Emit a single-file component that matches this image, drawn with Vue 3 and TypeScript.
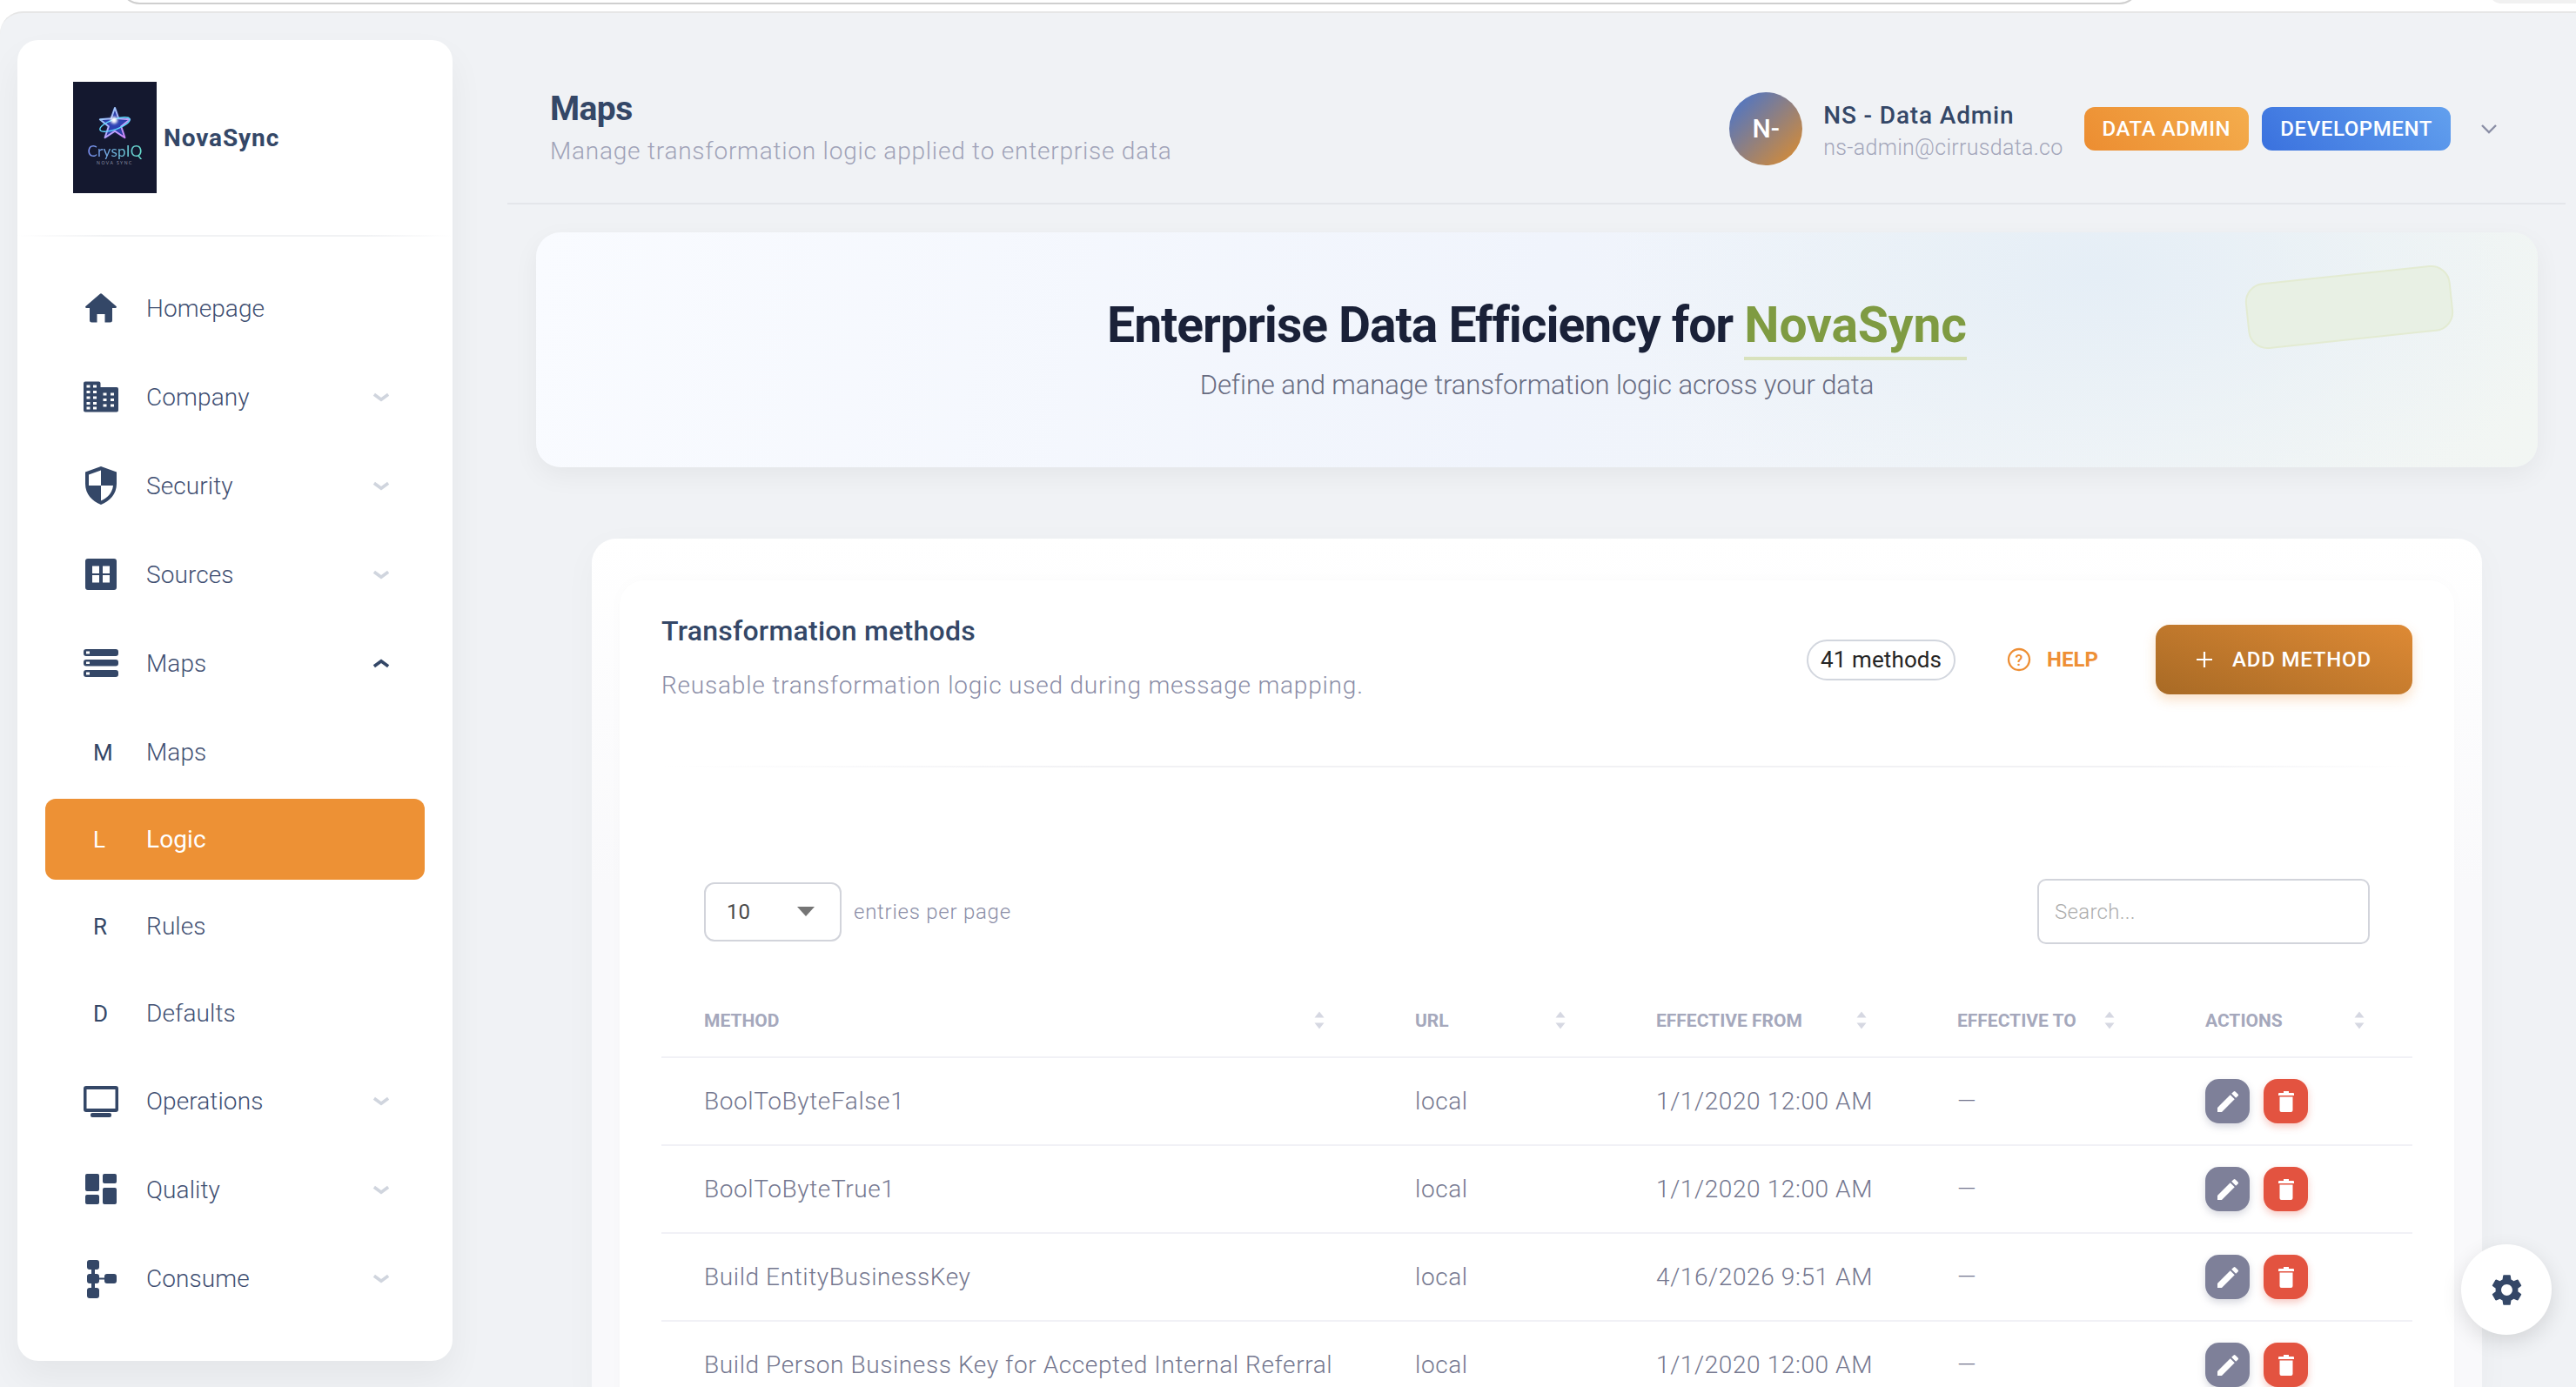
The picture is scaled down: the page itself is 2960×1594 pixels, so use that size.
<script setup lang="ts">
type NavItem = { label: string; icon?: string; letter?: string; arrow?: 'up' | 'down'; active?: boolean };

const box = (x: number, y: number, w: number, h: number, r = 0) =>
  `M${x + r} ${y}h${w - 2 * r}a${r} ${r} 0 0 1 ${r} ${r}v${h - 2 * r}a${r} ${r} 0 0 1 ${-r} ${r}h${2 * r - w}a${r} ${r} 0 0 1 ${-r} ${-r}v${2 * r - h}a${r} ${r} 0 0 1 ${r} ${-r}z`;

// icons sit in a 40x44 box
const icons: Record<string, string> = {
  home: 'M18.6 6a2 2 0 0 1 2.8 0L37.6 20a1.2 1.2 0 0 1-.8 2H33V36a2.5 2.5 0 0 1-2.5 2.5H24.5V29H15.5V38.5H9.5A2.5 2.5 0 0 1 7 36V22H3.2a1.2 1.2 0 0 1-.8-2z',
  company:
    'M2 4.5H17.5a2 2 0 0 1 2 2V11H38a2 2 0 0 1 2 2V37.5a2 2 0 0 1-2 2H2a2 2 0 0 1-2-2V6.5a2 2 0 0 1 2-2z' +
    [8.5, 15, 21.5, 28, 33.5].map((y) => box(3.5, y, 4, 3) + box(11, y, 4, 3)).join('') +
    [17.5, 24, 30.5].map((y) => box(22.5, y, 4, 3) + box(31, y, 4, 3)).join(''),
  security:
    'M20 0L38 6.5V20C38 32 30 40 20 44C10 40 2 32 2 20V6.5z' +
    'M20 4.5L6 9.5V22H20zM20 22V39.5C27 36.5 33 31 34 22z',
  sources: box(2, 4, 36, 36, 3) + box(10, 12.5, 8, 8.5) + box(22, 12.5, 8, 8.5) + box(10, 23, 8, 8.5) + box(22, 23, 8, 8.5),
  maps:
    box(0, 6, 40, 8, 3) + box(3, 8.5, 4, 3) + box(0, 18, 40, 7.5, 3) + box(3, 20.5, 4, 2.5) + box(0, 30, 40, 8, 3) + box(3, 32.5, 4, 3),
  operations: box(0, 5, 40, 30, 3) + box(3.5, 9, 33, 22) + box(8, 36, 24, 5, 2),
  quality: box(2, 4, 16, 20, 2) + box(2, 28, 16, 11, 2) + box(22, 4, 16, 11, 2) + box(22, 20, 16, 19, 2),
  consume:
    box(4, 1, 14, 11, 3) + box(4, 17, 14, 11, 3) + box(4, 33, 14, 12, 3) + box(24, 17, 14, 11, 3) +
    box(9, 12, 4, 5) + box(9, 28, 4, 5) + box(18, 21.5, 6, 2),
};

const nav: NavItem[] = [
  { label: 'Homepage', icon: 'home' },
  { label: 'Company', icon: 'company', arrow: 'down' },
  { label: 'Security', icon: 'security', arrow: 'down' },
  { label: 'Sources', icon: 'sources', arrow: 'down' },
  { label: 'Maps', icon: 'maps', arrow: 'up' },
  { label: 'Maps', letter: 'M' },
  { label: 'Logic', letter: 'L', active: true },
  { label: 'Rules', letter: 'R' },
  { label: 'Defaults', letter: 'D' },
  { label: 'Operations', icon: 'operations', arrow: 'down' },
  { label: 'Quality', icon: 'quality', arrow: 'down' },
  { label: 'Consume', icon: 'consume', arrow: 'down' },
];

const columns = ['Method', 'URL', 'Effective from', 'Effective to', 'Actions'];

const methods = [
  { name: 'BoolToByteFalse1', url: 'local', from: '1/1/2020 12:00 AM', to: '—' },
  { name: 'BoolToByteTrue1', url: 'local', from: '1/1/2020 12:00 AM', to: '—' },
  { name: 'Build EntityBusinessKey', url: 'local', from: '4/16/2026 9:51 AM', to: '—' },
  { name: 'Build Person Business Key for Accepted Internal Referral', url: 'local', from: '1/1/2020 12:00 AM', to: '—' },
];
</script>

<template>
  <div class="page">
    <div class="chrome">
      <span class="url-bar"></span>
      <span class="chrome-btn"></span>
    </div>
    <div class="shell">
      <aside class="sidebar">
        <div class="brand">
          <div class="logo">
            <svg class="logo-star" viewBox="0 0 44 44" width="42" height="42">
              <defs>
                <filter id="glow" x="-50%" y="-50%" width="200%" height="200%"><feGaussianBlur stdDeviation="1.4" /></filter>
                <linearGradient id="ring" x1="0" y1="0" x2="1" y2="1">
                  <stop offset="0" stop-color="#8fe0ff" />
                  <stop offset="1" stop-color="#d77cfa" />
                </linearGradient>
              </defs>
              <path d="M22 3L26.500 16L40 17L29.500 25.500L34 39L22 31L10 39L14.500 25.500L4 17L17.500 16Z" fill="#3b55e0" fill-opacity=".75" filter="url(#glow)" />
              <path d="M22 3L26.500 16L40 17L29.500 25.500L34 39L22 31L10 39L14.500 25.500L4 17L17.500 16Z" fill="#2c3bb5" fill-opacity=".4" stroke="url(#ring)" stroke-width="2" stroke-linejoin="round" />
              <ellipse cx="22" cy="23" rx="19" ry="6" transform="rotate(-20 22 23)" fill="none" stroke="#5fd8ff" stroke-width="1.500" />
              <circle cx="21" cy="18" r="4" fill="#fff" filter="url(#glow)" />
            </svg>
            <span class="logo-name">CryspIQ</span>
            <span class="logo-tag">NOVA SYNC</span>
          </div>
          <span class="brand-name">NovaSync</span>
        </div>
        <div class="brand-rule"></div>
        <nav class="nav">
          <div
            v-for="(item, i) in nav"
            :key="i"
            class="nav-item"
            :class="{ sub: item.letter, active: item.active }"
          >
            <span class="nav-icon">
              <svg v-if="item.icon" viewBox="0 0 40 44" width="40" height="44">
                <path :d="icons[item.icon]" fill="#344767" fill-rule="evenodd" />
              </svg>
              <span v-else class="nav-letter">{{ item.letter }}</span>
            </span>
            <span class="nav-label">{{ item.label }}</span>
            <svg v-if="item.arrow" class="nav-arrow" :class="item.arrow" viewBox="0 0 18 12" width="20" height="13">
              <path d="M1.500 3L9 8.500L16.500 3" fill="none" stroke-width="3.400" />
            </svg>
          </div>
        </nav>
      </aside>

      <main class="main">
        <header class="topbar">
          <div class="page-title">
            <h1>Maps</h1>
            <p>Manage transformation logic applied to enterprise data</p>
          </div>
          <div class="user">
            <span class="avatar">N-</span>
            <div class="user-info">
              <strong>NS - Data Admin</strong>
              <span>ns-admin@cirrusdata.co</span>
            </div>
            <span class="badge orange">DATA ADMIN</span>
            <span class="badge blue">DEVELOPMENT</span>
            <svg class="user-arrow" viewBox="0 0 20 12" width="20" height="12">
              <path d="M2 2L10 10L18 2" fill="none" stroke="#8a8ea5" stroke-width="2.400" />
            </svg>
          </div>
        </header>

        <section class="hero">
          <h2>Enterprise Data Efficiency for <span class="accent">NovaSync</span></h2>
          <p>Define and manage transformation logic across your data</p>
          <span class="hero-deco"></span>
        </section>

        <section class="panel">
          <div class="card">
            <div class="card-head">
              <div class="card-title">
                <h3>Transformation methods</h3>
                <p>Reusable transformation logic used during message mapping.</p>
              </div>
              <div class="card-actions">
                <span class="count">41 methods</span>
                <span class="help">
                  <svg viewBox="0 0 28 28" width="28" height="28">
                    <circle cx="14" cy="14" r="12" fill="none" stroke="#ee8f35" stroke-width="2.300" />
                    <text x="14" y="20.500" text-anchor="middle" font-size="18" font-weight="500" fill="#ee8f35">?</text>
                  </svg>
                  HELP
                </span>
                <span class="add-btn">
                  <svg viewBox="0 0 20 20" width="20" height="20">
                    <path d="M10 1V19M1 10H19" stroke="#fff" stroke-width="2.200" fill="none" />
                  </svg>
                  ADD METHOD
                </span>
              </div>
            </div>
            <div class="card-rule"></div>

            <div class="controls">
              <div class="entries">
                <span class="select">
                  10
                  <i class="caret"></i>
                </span>
                <span class="entries-text">entries per page</span>
              </div>
              <div class="search">Search...</div>
            </div>

            <table class="table">
              <colgroup>
                <col style="width: 817px" />
                <col style="width: 277px" />
                <col style="width: 346px" />
                <col style="width: 285px" />
                <col style="width: 287px" />
              </colgroup>
              <thead>
                <tr>
                  <th v-for="col in columns" :key="col">
                    <div class="th-inner">
                      <span>{{ col }}</span>
                      <svg viewBox="0 0 12 21" width="12" height="21">
                        <path d="M6 0.500L11.500 7.500H0.500Z" fill="#d6d8e2" />
                        <path d="M6 20.500L11.500 13.500H0.500Z" fill="#d6d8e2" />
                      </svg>
                    </div>
                  </th>
                </tr>
              </thead>
              <tbody>
                <tr v-for="row in methods" :key="row.name">
                  <td>{{ row.name }}</td>
                  <td>{{ row.url }}</td>
                  <td>{{ row.from }}</td>
                  <td>{{ row.to }}</td>
                  <td>
                    <div class="row-actions">
                      <span class="icon-btn edit">
                        <svg viewBox="0 0 24 24" width="32" height="32">
                          <path d="M3 17.250V21h3.750L17.810 9.940l-3.750-3.750L3 17.250zM20.710 7.040a1 1 0 0 0 0-1.410l-2.340-2.340a1 1 0 0 0-1.410 0l-1.830 1.830 3.750 3.750 1.830-1.830z" fill="#fff" />
                        </svg>
                      </span>
                      <span class="icon-btn del">
                        <svg viewBox="0 0 18 24" width="18" height="24">
                          <path d="M6 0h6v2H6zM1 2h16a1 1 0 0 1 1 1v2H0V3a1 1 0 0 1 1-1zM1.500 6.500h15V22a2 2 0 0 1-2 2h-11a2 2 0 0 1-2-2z" fill="#fff" />
                        </svg>
                      </span>
                    </div>
                  </td>
                </tr>
              </tbody>
            </table>
          </div>
        </section>
      </main>
    </div>

    <span class="fab">
      <svg viewBox="0 0 24 24" width="43" height="43">
        <path d="M19.140 12.940c.04-.3.06-.61.06-.94 0-.32-.02-.64-.07-.94l2.030-1.580a.49.49 0 0 0 .12-.61l-1.920-3.320a.49.49 0 0 0-.59-.22l-2.390.96c-.5-.38-1.030-.7-1.620-.94l-.36-2.540a.48.48 0 0 0-.48-.41h-3.840a.48.48 0 0 0-.47.41l-.36 2.540c-.59.24-1.130.57-1.620.94l-2.390-.96a.49.49 0 0 0-.59.22L2.740 8.870a.48.48 0 0 0 .12.61l2.030 1.580c-.05.3-.09.63-.09.94s.02.64.07.94l-2.030 1.580a.49.49 0 0 0-.12.61l1.920 3.320c.12.22.37.29.59.22l2.390-.96c.5.38 1.030.7 1.620.94l.36 2.540c.05.24.24.41.48.41h3.840c.24 0 .44-.17.47-.41l.36-2.540c.59-.24 1.130-.56 1.620-.94l2.390.96c.22.08.47 0 .59-.22l1.920-3.320a.48.48 0 0 0-.12-.61l-2.010-1.580zM12 15.600c-1.980 0-3.600-1.620-3.600-3.600s1.620-3.600 3.600-3.600 3.600 1.620 3.600 3.600-1.620 3.600-3.600 3.600z" fill="#344767" />
      </svg>
    </span>
  </div>
</template>

<style>
html,
body {
  margin: 0;
  height: 100%;
  background: #fff;
  overflow: hidden;
}
</style>

<style scoped>
.page {
  position: relative;
  width: 2960px;
  height: 1594px;
  overflow: hidden;
  font-family: Roboto, 'Liberation Sans', sans-serif;
  background: #fff;
}
h1,
h2,
h3,
p {
  margin: 0;
}

.chrome {
  position: relative;
  height: 13px;
  overflow: hidden;
}
.url-bar {
  position: absolute;
  left: 138px;
  top: -40px;
  width: 2320px;
  height: 45px;
  box-sizing: border-box;
  border: 2px solid #cfcfcf;
  border-radius: 24px;
}
.chrome-btn {
  position: absolute;
  left: 2860px;
  top: -30px;
  width: 120px;
  height: 34px;
  border-radius: 14px;
  background: #f1f1f1;
}

.shell {
  display: flex;
  align-items: flex-start;
  height: 1581px;
  box-sizing: border-box;
  background: #f0f2f5;
  border-top: 2px solid #e6e6e6;
  border-top-left-radius: 26px;
}

.sidebar {
  width: 500px;
  height: 1518px;
  flex: none;
  margin: 31px 0 0 20px;
  background: #fff;
  border-radius: 24px;
  box-shadow: 0 20px 40px rgba(0, 0, 0, 0.05);
}
.brand {
  display: flex;
  align-items: center;
  gap: 8px;
  padding: 48px 0 0 64px;
}
.logo {
  width: 96px;
  height: 128px;
  box-sizing: border-box;
  padding-top: 27px;
  display: flex;
  flex-direction: column;
  align-items: center;
  background: #14182f;
  font-family: Lato, sans-serif;
}
.logo-star {
  display: block;
  margin-bottom: 2px;
}
.logo-name {
  font-size: 17px;
  font-weight: 400;
  line-height: 18px;
  letter-spacing: 0.3px;
  background: linear-gradient(90deg, #7a8cf0, #66e0cc);
  -webkit-background-clip: text;
  background-clip: text;
  color: transparent;
}
.logo-tag {
  font-size: 5px;
  line-height: 8px;
  letter-spacing: 1.5px;
  color: #8f94a8;
}
.brand-name {
  font-size: 28px;
  font-weight: 700;
  letter-spacing: 0.9px;
  color: #344767;
}
.brand-rule {
  height: 2px;
  margin-top: 48px;
  background: linear-gradient(90deg, transparent, #f1f2f4 20%, #f1f2f4 80%, transparent);
}

.nav {
  padding-top: 31px;
}
.nav-item {
  display: flex;
  align-items: center;
  height: 102px;
  margin: 0 32px;
  padding-left: 44px;
  color: #3f4f72;
  font-size: 28px;
  font-weight: 300;
  letter-spacing: 0.1px;
}
.nav-item.sub {
  height: 93px;
  margin-bottom: 7px;
  border-radius: 12px;
}
.nav-item.sub:nth-child(6) {
  margin-top: 5px;
}
.nav-item.sub:nth-child(9) {
  margin-bottom: 3px;
}
.nav-item.active {
  background: #ed9135;
  color: #fff;
  font-weight: 400;
}
.nav-icon {
  width: 72px;
  flex: none;
  display: flex;
  align-items: center;
}
.nav-icon svg {
  display: block;
  overflow: visible;
}
.nav-letter {
  font-size: 26px;
  font-weight: 400;
  margin-left: 11px;
  color: #344767;
}
.active .nav-letter {
  color: #fff;
}
.nav-arrow {
  margin-left: auto;
  margin-right: 40px;
}
.nav-arrow path {
  stroke: #d0d5de;
}
.nav-arrow.up {
  transform: scaleY(-1);
}
.nav-arrow.up path {
  stroke: #344767;
}

.main {
  flex: 1;
  min-width: 0;
  margin: 0 12px 0 63px;
}
.topbar {
  display: flex;
  justify-content: space-between;
  align-items: center;
  height: 171px;
  padding: 47px 78px 0 49px;
  border-bottom: 2px solid #e4e6ea;
}
.page-title {
  margin-top: -1px;
}
.page-title h1 {
  font-size: 39px;
  line-height: 48px;
  font-weight: 700;
  letter-spacing: -0.6px;
  color: #344767;
}
.page-title p {
  margin-top: 5px;
  font-size: 28px;
  line-height: 40px;
  font-weight: 300;
  letter-spacing: 0.78px;
  color: #a0a3b8;
}
.user {
  display: flex;
  align-items: center;
}
.avatar {
  width: 84px;
  height: 84px;
  border-radius: 50%;
  display: flex;
  align-items: center;
  justify-content: center;
  background: linear-gradient(135deg, #4173d4, #e08d2a);
  color: #fff;
  font-size: 30px;
  font-weight: 500;
}
.user-info {
  display: flex;
  flex-direction: column;
  margin: 7px 24px 0 24px;
}
.user-info strong {
  font-size: 28px;
  line-height: 38px;
  font-weight: 500;
  letter-spacing: 0.85px;
  color: #344767;
}
.user-info span {
  font-size: 25px;
  line-height: 36px;
  font-weight: 300;
  letter-spacing: 0.3px;
  color: #a3a6ba;
}
.badge {
  height: 50px;
  padding: 0 21px;
  display: flex;
  align-items: center;
  border-radius: 12px;
  color: #fff;
  font-size: 24px;
  font-weight: 500;
  letter-spacing: 0.6px;
}
.badge.orange {
  background: linear-gradient(45deg, #ec8d31, #f4ad4d);
}
.badge.blue {
  margin-left: 15px;
  background: linear-gradient(45deg, #3a71de, #62a0ee);
}
.user-arrow {
  margin-left: 34px;
}

.hero {
  position: relative;
  height: 270px;
  box-sizing: border-box;
  padding-bottom: 2px;
  margin: 32px 32px 0 33px;
  display: flex;
  flex-direction: column;
  align-items: center;
  justify-content: center;
  border-radius: 28px;
  background:
    radial-gradient(ellipse 560px 300px at 78% 18%, #e5eef6, transparent),
    linear-gradient(100deg, #f9fbff, #f0f4fc 50%, #f2f6f3);
  box-shadow: 0 10px 30px rgba(0, 0, 0, 0.05);
}
.hero h2 {
  font-size: 57px;
  line-height: 74px;
  font-weight: 700;
  letter-spacing: -1.02px;
  color: #1a2138;
}
.accent {
  color: #7f9b42;
  padding-bottom: 3px;
  letter-spacing: -0.1px;
  border-bottom: 4px solid #d8e2bd;
}
.hero p {
  margin-top: 10px;
  font-size: 31px;
  line-height: 44px;
  font-weight: 300;
  letter-spacing: -0.1px;
  color: #676b81;
}
.hero-deco {
  position: absolute;
  left: 1965px;
  top: 48px;
  width: 237px;
  height: 76px;
  box-sizing: border-box;
  transform: rotate(-6deg);
  border: 2px solid #e3ebd2;
  border-radius: 22px;
  background: #e8f0e4;
}

.panel {
  margin: 82px 96px 0 97px;
  padding: 48px 32px 0;
  border-radius: 28px;
  background: linear-gradient(180deg, #fff, #f9f9fb 40%);
  box-shadow: 0 10px 40px rgba(0, 0, 0, 0.03);
}
.card {
  padding: 0 48px;
  border-radius: 28px 28px 0 0;
  background: #fff;
  box-shadow: 0 0 18px rgba(0, 0, 0, 0.02);
}
.card-head {
  display: flex;
  justify-content: space-between;
  align-items: center;
  padding-top: 38px;
}
.card-title h3 {
  font-size: 32px;
  line-height: 40px;
  font-weight: 500;
  letter-spacing: 0.25px;
  color: #344767;
}
.card-title p {
  margin-top: 23px;
  font-size: 28px;
  line-height: 40px;
  font-weight: 300;
  letter-spacing: 0.8px;
  color: #8b8ea7;
}
.card-actions {
  display: flex;
  align-items: center;
  margin-top: 3px;
}
.count {
  height: 47px;
  box-sizing: border-box;
  padding: 0 14px;
  display: flex;
  align-items: center;
  border: 2px solid #d2d6de;
  border-radius: 24px;
  color: #252525;
  font-size: 26px;
  font-weight: 400;
  letter-spacing: 0.1px;
}
.help {
  display: flex;
  align-items: center;
  gap: 18px;
  margin: 0 66px 0 59px;
  color: #ee8f35;
  font-size: 24px;
  font-weight: 700;
}
.help text {
  font-family: Roboto, sans-serif;
}
.add-btn {
  width: 295px;
  height: 80px;
  box-sizing: border-box;
  padding-left: 46px;
  display: flex;
  align-items: center;
  gap: 22px;
  border-radius: 16px;
  background: linear-gradient(20deg, #a86a25, #de8a35);
  box-shadow: 0 6px 14px rgba(237, 145, 53, 0.28);
  color: #fff;
  font-size: 24px;
  font-weight: 500;
  letter-spacing: 0.8px;
}
.card-rule {
  height: 2px;
  margin-top: 72px;
  background: linear-gradient(90deg, transparent, #f1f1f4 25%, #f1f1f4 85%, transparent);
}

.controls {
  display: flex;
  justify-content: space-between;
  align-items: center;
  padding: 128px 49px 0;
}
.entries {
  display: flex;
  align-items: center;
  gap: 14px;
}
.select {
  width: 158px;
  height: 68px;
  box-sizing: border-box;
  padding: 0 29px 0 24px;
  display: flex;
  align-items: center;
  justify-content: space-between;
  border: 2px solid #d2d4db;
  border-radius: 12px;
  color: #4a4a4a;
  font-size: 24px;
  font-weight: 400;
}
.caret {
  width: 0;
  height: 0;
  border-left: 10px solid transparent;
  border-right: 10px solid transparent;
  border-top: 11px solid #757575;
}
.entries-text {
  color: #8b8ea7;
  font-size: 24px;
  font-weight: 300;
  letter-spacing: 0.75px;
}
.search {
  width: 382px;
  height: 75px;
  box-sizing: border-box;
  padding-left: 18px;
  display: flex;
  align-items: center;
  border: 2px solid #d2d4db;
  border-radius: 10px;
  color: #adadad;
  font-size: 24px;
  font-weight: 300;
  letter-spacing: 0.3px;
}

.table {
  width: 2012px;
  margin-top: 46px;
  table-layout: fixed;
  border-collapse: collapse;
}
.table th {
  height: 84px;
  padding: 0 55px 0 49px;
  box-sizing: border-box;
  border-bottom: 2px solid #f1f1f6;
}
.th-inner {
  display: flex;
  justify-content: space-between;
  align-items: center;
  color: #a5a8bc;
  font-size: 21px;
  font-weight: 700;
  text-transform: uppercase;
  letter-spacing: 0;
}
.th-inner svg {
  display: block;
}
.table td {
  height: 101px;
  padding: 0 0 0 49px;
  box-sizing: border-box;
  border-bottom: 2px solid #f1f1f6;
  color: #74778f;
  font-size: 28px;
  font-weight: 300;
  letter-spacing: 0.6px;
  white-space: nowrap;
}
.row-actions {
  display: flex;
  gap: 16px;
}
.icon-btn {
  width: 51px;
  height: 51px;
  border-radius: 16px;
  display: flex;
  align-items: center;
  justify-content: center;
}
.icon-btn.edit {
  background: #7e8099;
  box-shadow: 0 4px 8px rgba(126, 128, 153, 0.3);
}
.icon-btn.del {
  background: #e35340;
  box-shadow: 0 4px 8px rgba(227, 83, 64, 0.3);
}

.fab {
  position: absolute;
  left: 2828px;
  top: 1430px;
  width: 104px;
  height: 104px;
  border-radius: 50%;
  display: flex;
  align-items: center;
  justify-content: center;
  background: #fff;
  box-shadow: 0 8px 24px rgba(0, 0, 0, 0.12);
}
</style>
